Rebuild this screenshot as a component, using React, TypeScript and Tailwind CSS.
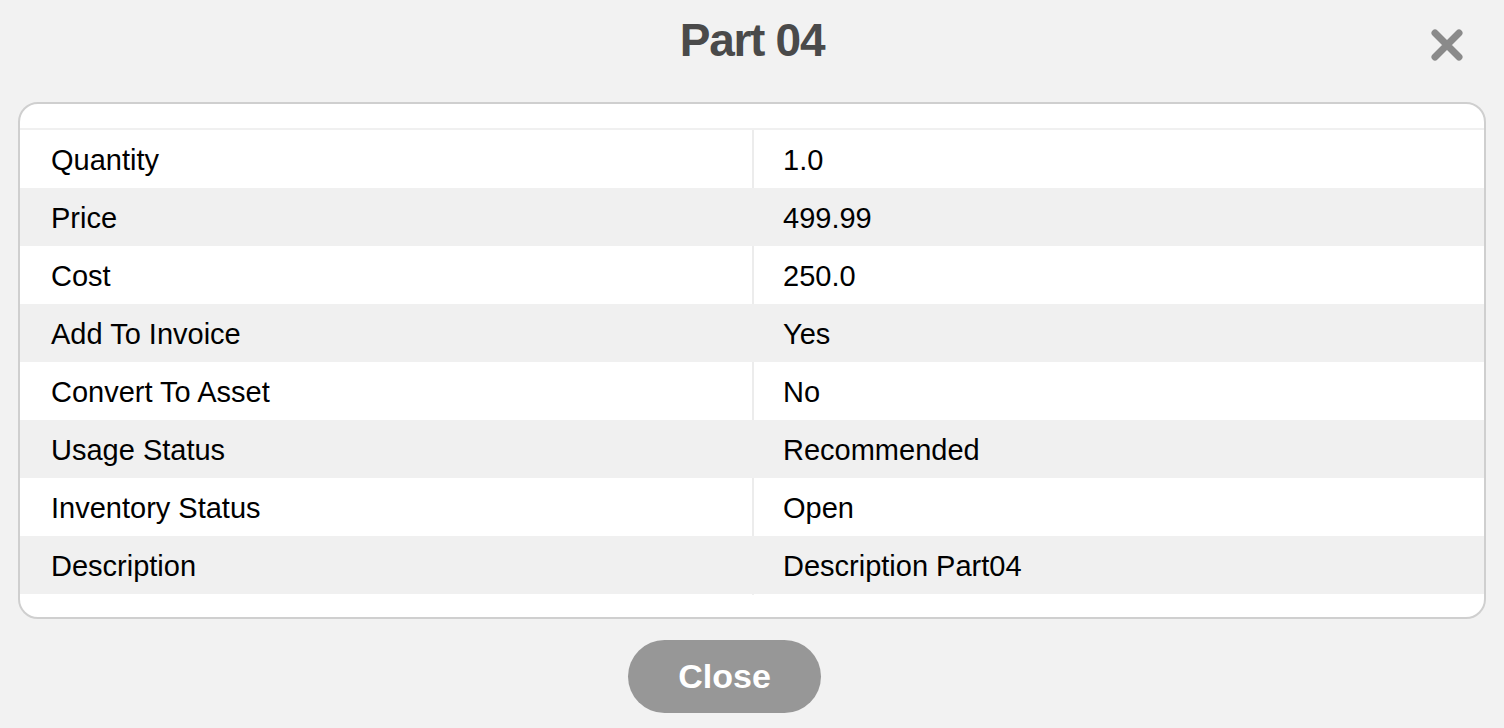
const rows: [string, string][] = [
  ["Quantity", "1.0"],
  ["Price", "499.99"],
  ["Cost", "250.0"],
  ["Add To Invoice", "Yes"],
  ["Convert To Asset", "No"],
  ["Usage Status", "Recommended"],
  ["Inventory Status", "Open"],
  ["Description", "Description Part04"],
];

export default function App() {
  return (
    <div
      className="flex h-[728px] w-[1504px] flex-col bg-[#f2f2f2]"
      style={{ fontFamily: '"Liberation Sans", Arial, sans-serif' }}
    >
      {/* header */}
      <div className="relative flex h-[102px] justify-center">
        <h1 className="pt-[11px] text-[46px] font-bold leading-[58px] tracking-[-1.3px] text-[#4a4a4a]">
          Part 04
        </h1>
        <button className="absolute right-[40px] top-[28px]" aria-label="close">
          <svg width="34" height="34" viewBox="0 0 34 34">
            <path d="M5 5 L29 29 M29 5 L5 29" stroke="#8a8a8a" strokeWidth="7" strokeLinecap="round" />
          </svg>
        </button>
      </div>

      {/* details card */}
      <div className="mx-[18px] rounded-[20px] border-2 border-[#cfcfcf] bg-white pb-[23px] pt-[24px]">
        <div className="border-t-2 border-[#f0f0f0]">
          {rows.map(([label, value], i) => (
            <div
              key={label}
              className={`grid h-[58px] grid-cols-2 text-[29px] leading-[58px] text-black ${
                i % 2 === 1 ? "bg-[#f0f0f0]" : "bg-white"
              }`}
            >
              <div className="pl-[31px] pt-[1px]">{label}</div>
              <div
                className={`border-l-2 pl-[29px] pt-[1px] ${
                  i % 2 === 1 ? "border-[#f0f0f0]" : "border-[#ececec]"
                }`}
              >
                {value}
              </div>
            </div>
          ))}
        </div>
      </div>

      {/* footer */}
      <div className="flex pt-[21px]">
        <button className="ml-[628px] h-[73px] w-[193px] rounded-full bg-[#979797] text-[34px] font-bold text-white">
          Close
        </button>
      </div>
    </div>
  );
}
